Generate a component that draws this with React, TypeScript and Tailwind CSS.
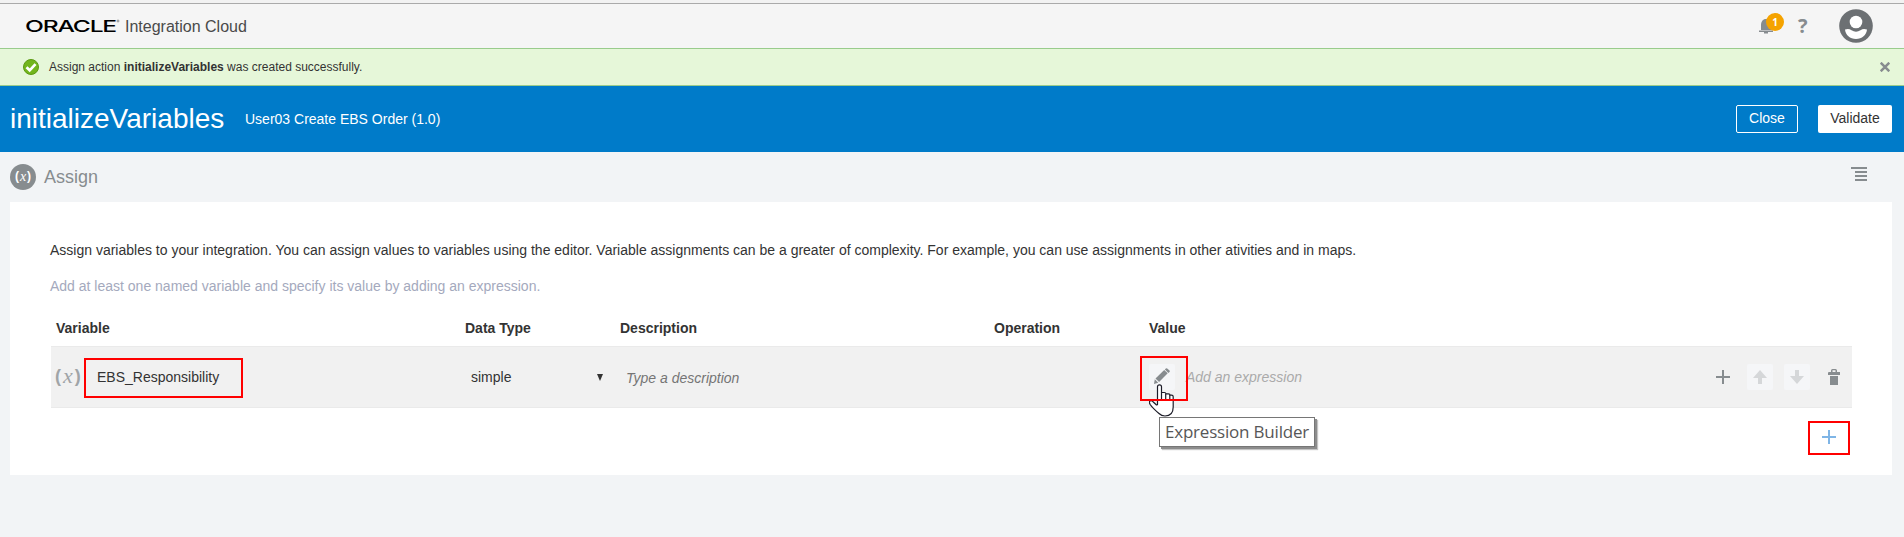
import type { ReactNode } from "react";

function OracleLogo() {
  return (
    <svg width="96" height="24" viewBox="0 0 96 24" className="block shrink-0 overflow-visible" role="img" aria-label="Oracle">
      <text x="-1" y="18" textLength="91" lengthAdjust="spacingAndGlyphs" letterSpacing="-0.8" fontFamily="Inter, sans-serif" fontWeight="500" fontSize="16.5" fill="#000">
        ORACLE
      </text>
      <circle cx="92" cy="7" r="1" fill="none" stroke="#555" strokeWidth="0.6" />
    </svg>
  );
}

function BellIcon() {
  return (
    <svg width="14" height="16" viewBox="0 0 14 16" className="block">
      <path d="M2 12V7.500C2 3.500 3.800 1 7 1s5 2.500 5 6.500V12z" fill="#878c8f" />
      <path d="M0 12.500h14V14H0zM5 14h4v1.500H5z" fill="#878c8f" />
    </svg>
  );
}

function AvatarIcon() {
  return (
    <svg width="34" height="34" viewBox="0 0 34 34" className="block">
      <circle cx="17" cy="17" r="16.800" fill="#6c7073" />
      <circle cx="17" cy="13" r="6.300" fill="#fff" />
      <path d="M6 20.500c2.500-1 4.500-.8 6.500.7 2.800 1.900 6.200 1.900 9 0 2-1.500 4-1.700 6.500-.7-.5 5.500-5 9.500-11 9.500S6.500 26 6 20.500z" fill="#fff" />
    </svg>
  );
}

function CheckIcon() {
  return (
    <svg width="16" height="16" viewBox="0 0 16 16" className="block shrink-0">
      <circle cx="8" cy="8" r="7.500" fill="#72b51c" stroke="#5c9a12" />
      <path d="M3.500 8.200l3.200 3.100 5.800-6.200" fill="none" stroke="#fff" strokeWidth="2.700" />
    </svg>
  );
}

function CloseIcon() {
  return (
    <svg width="10" height="10" viewBox="0 0 10 10" className="block">
      <path d="M.7.7l8.600 8.600M9.300.7L.7 9.300" stroke="#878c8f" strokeWidth="2.500" />
    </svg>
  );
}

function MenuIcon() {
  return (
    <svg width="16" height="14" viewBox="0 0 16 14" className="block">
      <path d="M0 0h16v2H0zM4 4h12v2H4zM4 8h12v2H4zM4 12h12v2H4z" fill="#878c8f" />
    </svg>
  );
}

function PlusIcon({ color }: { color: string }) {
  return (
    <svg width="14" height="14" viewBox="0 0 14 14" className="block">
      <path d="M6 0h2v14H6zM0 6h14v2H0z" fill={color} />
    </svg>
  );
}

function ArrowIcon({ down = false }: { down?: boolean }) {
  return (
    <svg width="14" height="14" viewBox="0 0 14 14" className={down ? "block rotate-180" : "block"}>
      <path d="M7 0l7 8H9v6H5V8H0z" fill="#d5d7d9" />
    </svg>
  );
}

function TrashIcon() {
  return (
    <svg width="12" height="16" viewBox="0 0 12 16" className="block">
      <path d="M3 3V1.500Q3 0 4.500 0h3Q9 0 9 1.500V3h3v3H0V4q0-1 1-1zM4.500 3h3V1.200h-3z" fill="#878c8f" fillRule="evenodd" />
      <path d="M2 7h8v9H2z" fill="#878c8f" />
    </svg>
  );
}

function PencilIcon() {
  return (
    <svg width="16" height="16" viewBox="0 0 16 16" className="block">
      <path d="M0 16l.8-4.700 3.400 3.400z" fill="#878c8f" />
      <path d="M1.500 10.600L10.200 2l3.500 3.300-8.600 8.600z" fill="#878c8f" />
      <path d="M10.900 1.400l.9-.9q.7-.7 1.400 0l2.300 2q.7.700 0 1.400l-1.100 1z" fill="#878c8f" />
    </svg>
  );
}

function HandCursor() {
  return (
    <svg width="26" height="33" viewBox="0 0 26 33" className="block">
      <path
        d="M8.500 18V2.800Q8.500.8 10.500.8t2 2V8.500h2.800q1.500 0 1.700 1.300h2.500q1.500 0 1.500 1.300h1.500q1.700 0 1.700 1.700V23q0 9-8.200 9-3.500 0-6-2.500Q3.500 24 1.200 20.500-.3 18 1 17q1.500-.8 3 .7l3.500 3.300 1-.3z"
        fill="#fff"
        stroke="#1c1c28"
        strokeWidth="1.200"
        strokeLinejoin="round"
      />
      <path d="M12.500 8.500V15M16.700 9.800V15M20.800 11v4" stroke="#1c1c28" strokeWidth="1.200" />
    </svg>
  );
}

function IconTile({ children }: { children: ReactNode }) {
  return <span className="flex size-[26px] items-center justify-center rounded-[2px] bg-[#f5f6f8]">{children}</span>;
}

const columns = "grid grid-cols-[409px_155px_374px_155px_1fr]";

export default function App() {
  return (
    <div className="flex h-[537px] w-[1904px] flex-col overflow-hidden bg-[#f2f4f6] font-['Liberation_Sans',Arial,sans-serif] text-sm text-[#333]">
      <div className="h-1 shrink-0 border-b border-[#aaa] bg-[#f2f2f2]" />
      <header className="flex h-11 shrink-0 items-center bg-[#f5f5f5] pl-[26px] pr-[31px]">
        <OracleLogo />
        <span className="ml-[3px] pt-0.5 text-base leading-5 text-[#4a4a4a]">Integration Cloud</span>
        <div className="ml-auto flex items-center">
          <div className="relative">
            <BellIcon />
            <span className="absolute -top-[5px] left-[7px] flex size-[18px] items-center justify-center rounded-full bg-[#f5a300] font-['Open_Sans',sans-serif] text-[10px] font-bold text-white">1</span>
          </div>
          <span className="ml-[25px] mr-[30px] w-[11px] font-['Open_Sans',sans-serif] text-[20px] leading-6 font-bold text-[#878c8f]">?</span>
          <AvatarIcon />
        </div>
      </header>

      <div className="flex h-[38px] shrink-0 items-center border-y border-[#99cc8c] bg-[#e6f7d9] pl-[23px] pr-[14px] text-xs">
        <CheckIcon />
        <p className="ml-[10px]">
          Assign action <b>initializeVariables</b> was created successfully.
        </p>
        <button className="ml-auto" aria-label="Dismiss">
          <CloseIcon />
        </button>
      </div>

      <div className="flex h-[66px] shrink-0 items-center bg-[#007bc9] pl-[10px] pr-3 text-white">
        <h1 className="w-[235px] text-[28px] leading-8">initializeVariables</h1>
        <span>User03 Create EBS Order (1.0)</span>
        <button className="ml-auto flex h-7 w-[62px] items-center justify-center rounded-[2px] border border-white pb-0.5">Close</button>
        <button className="ml-5 flex h-7 w-[74px] items-center justify-center rounded-[2px] bg-white pb-0.5 text-[#333]">Validate</button>
      </div>

      <div className="flex h-[50px] shrink-0 items-center pl-[10px] pr-[37px]">
        <span className="flex size-[26px] items-center justify-center gap-px rounded-full bg-[#878c8f] pb-px font-['Liberation_Serif',serif] text-[14px] text-white">
          <b className="font-['Liberation_Sans',sans-serif] text-[12px]">(</b>
          <i>x</i>
          <b className="font-['Liberation_Sans',sans-serif] text-[12px]">)</b>
        </span>
        <h2 className="ml-2 text-lg text-[#878c8f]">Assign</h2>
        <button className="mb-1.5 ml-auto" aria-label="Menu">
          <MenuIcon />
        </button>
      </div>

      <main className="mx-[10px] mr-3 flex h-[273px] shrink-0 flex-col bg-white pl-[40px] pr-10">
        <p className="mt-[38px] leading-5">
          Assign variables to your integration. You can assign values to variables using the editor. Variable assignments can be a greater of complexity. For example, you can use assignments in other ativities and in maps.
        </p>
        <p className="mt-4 leading-5 text-[#a4a9bd]">Add at least one named variable and specify its value by adding an expression.</p>

        <div className="ml-px">
          <div className={`${columns} h-[50px] items-center pt-3.5 font-bold`}>
            <span className="pl-[5px]">Variable</span>
            <span className="pl-[5px]">Data Type</span>
            <span className="pl-[5px]">Description</span>
            <span className="pl-[5px]">Operation</span>
            <span className="pl-[5px]">Value</span>
          </div>

          <div className={`${columns} h-[62px] items-center border-y border-[#eaeaea] bg-[#f1f1f1]`}>
            <div className="relative flex h-6 items-center pl-1">
              <span className="flex w-[42px] items-center gap-0.5 pb-0.5 font-['Liberation_Serif',serif] text-[22px] leading-5 text-[#a0a4a7]">
                <b className="font-['Liberation_Sans',sans-serif] text-[18px]">(</b>
                <i>x</i>
                <b className="font-['Liberation_Sans',sans-serif] text-[18px]">)</b>
              </span>
              <span>EBS_Responsibility</span>
              <span className="absolute -top-[7px] left-[33px] h-10 w-[159px] border-2 border-[#f00]" />
            </div>
            <div className="flex items-center pl-[11px] pr-[12px]">
              <span>simple</span>
              <svg width="6" height="7" viewBox="0 0 6 7" className="ml-auto block">
                <path d="M0 0h6L3 7z" fill="#333" />
              </svg>
            </div>
            <span className="pl-[11px] pt-0.5 text-[#757575] italic">Type a description</span>
            <span />
            <div className="flex items-center pl-[5px] pr-3">
              <div className="relative">
                <span className="flex size-[26px] items-center justify-center rounded-[2px] bg-[#f5f6f8] pb-0.5">
                  <PencilIcon />
                </span>
                <span className="absolute -top-2 -left-[9px] z-20 h-[45px] w-12 border-2 border-[#f00]" />
                <span className="absolute top-[20px] left-0 z-10">
                  <HandCursor />
                </span>
                <span className="absolute top-[53px] left-[10px] flex h-[30px] w-[156px] items-center justify-center border border-[#767676] bg-white pt-px font-['Open_Sans',sans-serif] text-[17px] tracking-[-0.012em] whitespace-nowrap text-[#575757] shadow-[2px_2px_0_#8c8c8c,3px_3px_1px_#c4c4c4]">
                  Expression Builder
                </span>
              </div>
              <span className="ml-[11px] text-[#aaa] italic">Add an expression</span>
              <div className="ml-auto flex items-center">
                <span className="mr-[17px]">
                  <PlusIcon color="#878c8f" />
                </span>
                <IconTile>
                  <ArrowIcon />
                </IconTile>
                <span className="w-[11px]" />
                <IconTile>
                  <ArrowIcon down />
                </IconTile>
                <span className="ml-[18px]">
                  <TrashIcon />
                </span>
              </div>
            </div>
          </div>

          <div className="mt-[13px] flex justify-end pr-0.5">
            <button className="flex h-[34px] w-[42px] items-center justify-center border-2 border-[#f00] pb-0.5" aria-label="Add variable">
              <PlusIcon color="#7fb5e6" />
            </button>
          </div>
        </div>
      </main>
    </div>
  );
}
